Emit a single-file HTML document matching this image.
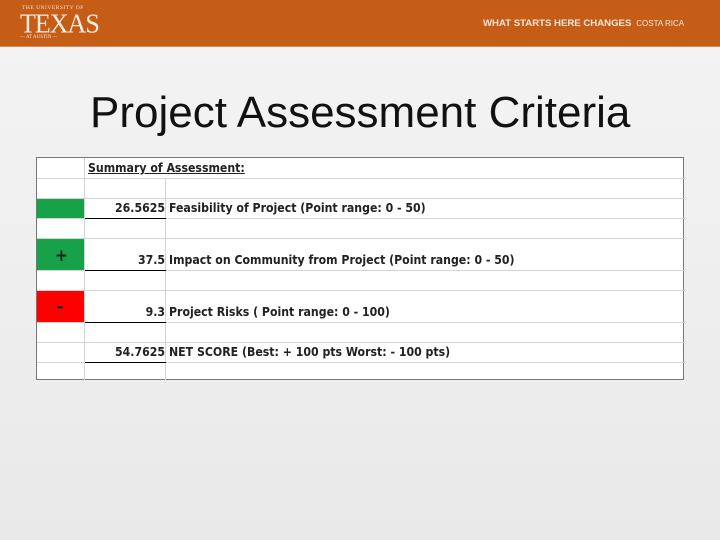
<!DOCTYPE html>
<html><head><style>
body{margin:0;width:720px;height:540px;overflow:hidden;background:linear-gradient(#f4f4f4,#e9e9e9);font-family:"Liberation Sans",sans-serif;position:relative}
.hdr{position:absolute;left:0;top:0;width:720px;height:46px;background:#c65d17;border-bottom:1px solid #d98a5a}
.a{position:absolute}
.tbl{position:absolute;left:36px;top:157px;width:648px;height:223px;background:#fff;border:1px solid #777;box-sizing:border-box}
.h{position:absolute;left:0;width:648px;height:1px;background:#d4d4d4}
.v{position:absolute;width:1px;background:#d4d4d4}
.t{position:absolute;font-family:"DejaVu Sans Condensed","Liberation Sans Narrow","Liberation Sans",sans-serif;font-weight:bold;font-size:12.2px;color:#222;white-space:nowrap}
.n{text-align:right;width:78px;left:50px}
.ul{position:absolute;left:48px;width:81px;height:1px;background:#000}
</style></head><body>
<div class="hdr"></div>
<div class="a" style="left:22px;top:5px;color:#f3e4d8;font-family:'Liberation Serif',serif;font-size:5.5px;letter-spacing:.5px">THE UNIVERSITY OF</div>
<div class="a" style="left:20px;top:9px;color:#f7ebe1;font-family:'Liberation Serif',serif;font-size:26px;letter-spacing:-1px;transform:scaleY(1.05)">TEXAS</div>
<div class="a" style="left:20px;top:35px;color:#f3e4d8;font-family:'Liberation Serif',serif;font-size:5px">— AT AUSTIN —</div>
<div class="a" style="left:483px;top:18px;color:#f7e8dc;font-size:9.6px;font-weight:bold">WHAT STARTS HERE CHANGES <span style="font-weight:normal;font-size:8px">&nbsp;COSTA RICA</span></div>
<div class="a" style="left:90px;top:88px;font-size:44px;color:#111">Project Assessment Criteria</div>
<div class="tbl">
<div class="a" style="left:0;top:40px;width:48px;height:20px;background:#17a24a"></div>
<div class="a" style="left:0;top:80px;width:48px;height:32px;background:#17a24a"></div>
<div class="a" style="left:0;top:132px;width:48px;height:32px;background:#f00"></div>
<div class="h" style="top:20px"></div><div class="h" style="top:40px"></div><div class="h" style="top:60px"></div><div class="h" style="top:80px"></div><div class="h" style="top:112px"></div><div class="h" style="top:132px"></div><div class="h" style="top:164px"></div><div class="h" style="top:184px"></div><div class="h" style="top:204px"></div>
<div class="v" style="left:47px;top:0;height:222px"></div>
<div class="v" style="left:128px;top:20px;height:202px"></div>
<div class="ul" style="top:60px"></div><div class="ul" style="top:112px"></div><div class="ul" style="top:164px"></div><div class="ul" style="top:204px"></div>
<div class="t" style="left:51px;top:3px;text-decoration:underline">Summary of Assessment:</div>
<div class="t n" style="top:43px">26.5625</div><div class="t" style="left:132px;top:43px">Feasibility of Project (Point range: 0 - 50)</div>
<div class="t n" style="top:95px">37.5</div><div class="t" style="left:132px;top:95px">Impact on Community from Project (Point range: 0 - 50)</div>
<div class="t n" style="top:147px">9.3</div><div class="t" style="left:132px;top:147px">Project Risks ( Point range: 0 - 100)</div>
<div class="t n" style="top:187px">54.7625</div><div class="t" style="left:132px;top:187px">NET SCORE (Best: + 100 pts Worst: - 100 pts)</div>
<div class="t" style="left:18px;top:88px;font-size:17px">+</div>
<div class="t" style="left:20px;top:139px;font-size:17px">-</div>
</div>
</body></html>
